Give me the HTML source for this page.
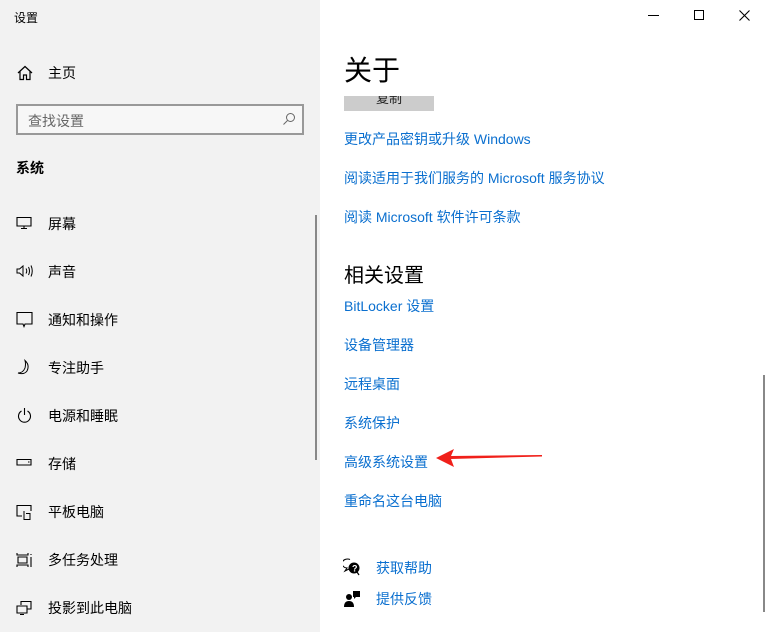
<!DOCTYPE html>
<html><head><meta charset="utf-8"><style>
*{margin:0;padding:0;box-sizing:border-box}
body{width:768px;height:632px;overflow:hidden;background:#fff;font-family:"Liberation Sans","Noto Sans CJK SC",sans-serif;font-size:14px;color:#000;position:relative}
.side{position:absolute;left:0;top:0;width:320px;height:632px;background:#f2f2f2}
.a{position:absolute;white-space:nowrap}
.item{position:absolute;left:48px;font-size:14px;line-height:16px}
.ic{position:absolute;left:16px}
.lnk{position:absolute;left:344px;color:#0a6fcf;font-size:14px;line-height:16px;white-space:nowrap}
</style></head><body>
<div class="side">
<div class="a" style="left:14px;top:9px;font-size:12px">设置</div>
<svg class="ic" style="top:65px" width="18" height="16" viewBox="0 0 18 16"><path d="M2 8L9 1.5L16 8M4 6.5V14.5H7.5V10H10.5V14.5H14V6.5" fill="none" stroke="#000" stroke-width="1.2"/></svg>
<div class="item" style="top:65px">主页</div>
<div class="a" style="left:16px;top:104px;width:288px;height:31px;border:2px solid #999;background:#f7f7f7"></div>
<div class="a" style="left:28px;top:111px;color:#666">查找设置</div>
<svg class="a" style="left:282px;top:112px" width="14" height="14" viewBox="0 0 14 14"><circle cx="8.5" cy="5.5" r="4" fill="none" stroke="#666" stroke-width="1"/><path d="M5.5 8.5L1.5 12.5" stroke="#666" stroke-width="1"/></svg>
<div class="a" style="left:16px;top:158px;font-weight:bold">系统</div>
<svg class="ic" style="top:216px" width="18" height="14"><path d="M1 1.5H15V10H1Z M8 10V12.5M5 12.5H11" fill="none" stroke="#000" stroke-width="1.1"/></svg>
<div class="item" style="top:216px">屏幕</div>
<svg class="ic" style="top:264px" width="18" height="14"><path d="M1 5H3.5L7 2V12L3.5 9H1Z M10 4.5Q11.5 7 10 9.5M12.5 3Q14.5 7 12.5 11M15 1.5Q17.5 7 15 12.5" fill="none" stroke="#000" stroke-width="1"/></svg>
<div class="item" style="top:264px">声音</div>
<svg class="ic" style="top:311px" width="18" height="18"><path d="M1 1.5H16V13H9L8 15.5L7 13H1Z" fill="none" stroke="#000" stroke-width="1.1"/></svg>
<div class="item" style="top:312px">通知和操作</div>
<svg class="ic" style="top:359px" width="18" height="18"><path d="M9 1.5Q14 6 11 12Q8 16 2 14Q7 14 9 9Q10 5 9 1.5Z" fill="none" stroke="#000" stroke-width="1"/></svg>
<div class="item" style="top:360px">专注助手</div>
<svg class="ic" style="top:407px" width="18" height="18"><path d="M5.5 4A6 6 0 1 0 11.5 4M8.5 1V8" fill="none" stroke="#000" stroke-width="1.1"/></svg>
<div class="item" style="top:408px">电源和睡眠</div>
<svg class="ic" style="top:458px" width="18" height="10"><path d="M1 1.5H15V7H1Z" fill="none" stroke="#000" stroke-width="1.1"/><path d="M12 4H13.5" stroke="#000"/></svg>
<div class="item" style="top:456px">存储</div>
<svg class="ic" style="top:504px" width="18" height="18"><path d="M6 12H1V1.5H15V7" fill="none" stroke="#000" stroke-width="1.1"/><path d="M8 7V15.5H14V9.5H10" fill="none" stroke="#000" stroke-width="1"/></svg>
<div class="item" style="top:504px">平板电脑</div>
<svg class="ic" style="top:552px" width="18" height="18"><path d="M1 1V3H12V1M1 15V13H12V15M2 5V11H11V5Z M15 2V3M15 5V15" fill="none" stroke="#000" stroke-width="1.1"/></svg>
<div class="item" style="top:552px">多任务处理</div>
<svg class="ic" style="top:600px" width="18" height="16"><path d="M5 5V1.5H15V9H11M1 6H11V13H1Z M4 14.5H8" fill="none" stroke="#000" stroke-width="1.1"/></svg>
<div class="item" style="top:600px">投影到此电脑</div>
<div class="a" style="left:315px;top:215px;width:2px;height:245px;background:#888"></div>
</div>
<svg class="a" style="left:648px;top:15px" width="12" height="2"><rect width="11" height="1" fill="#000"/></svg>
<div class="a" style="left:694px;top:10px;width:10px;height:10px;border:1px solid #000"></div>
<svg class="a" style="left:739px;top:10px" width="12" height="12"><path d="M0.5 0.5L10.5 10.5M10.5 0.5L0.5 10.5" stroke="#000" stroke-width="1.1"/></svg>
<div class="a" style="left:344px;top:54px;font-size:28px;line-height:34px">关于</div>
<div class="a" style="left:344px;top:96px;width:90px;height:15px;background:#ccc;overflow:hidden"><div style="text-align:center;font-size:13px;line-height:13px;margin-top:-4px;color:#222">复制</div></div>
<div class="lnk" style="top:131px">更改产品密钥或升级 Windows</div>
<div class="lnk" style="top:170px">阅读适用于我们服务的 Microsoft 服务协议</div>
<div class="lnk" style="top:209px">阅读 Microsoft 软件许可条款</div>
<div class="a" style="left:344px;top:264px;font-size:20px;line-height:24px">相关设置</div>
<div class="lnk" style="top:298px">BitLocker 设置</div>
<div class="lnk" style="top:337px">设备管理器</div>
<div class="lnk" style="top:376px">远程桌面</div>
<div class="lnk" style="top:415px">系统保护</div>
<div class="lnk" style="top:454px">高级系统设置</div>
<svg class="a" style="left:434px;top:446px" width="110" height="24"><path d="M2 12L20 3L17 10L108 9L108 10.5L17 13L20 21Z" fill="#f0201a"/></svg>
<div class="lnk" style="top:493px">重命名这台电脑</div>
<svg class="a" style="left:343px;top:558px" width="18" height="18"><path d="M7 1.5A5.5 4.5 0 1 0 4 10L2 13L6 11" fill="none" stroke="#000" stroke-width="1.1"/><circle cx="11" cy="10" r="5.5" fill="#000"/><text x="9" y="13.5" font-size="9" fill="#fff" font-family="Liberation Sans" font-weight="bold">?</text><path d="M14 14L16 17" stroke="#000" stroke-width="1.2"/></svg>
<div class="lnk" style="left:376px;top:560px">获取帮助</div>
<svg class="a" style="left:344px;top:590px" width="18" height="18"><circle cx="5" cy="7" r="3" fill="#000"/><path d="M0 17Q0 11 5 11Q10 11 10 17Z" fill="#000"/><path d="M9 1H16V7H12L10 9V7H9Z" fill="#000"/></svg>
<div class="lnk" style="left:376px;top:591px">提供反馈</div>
<div class="a" style="left:763px;top:375px;width:2px;height:237px;background:#888"></div>
</body></html>
